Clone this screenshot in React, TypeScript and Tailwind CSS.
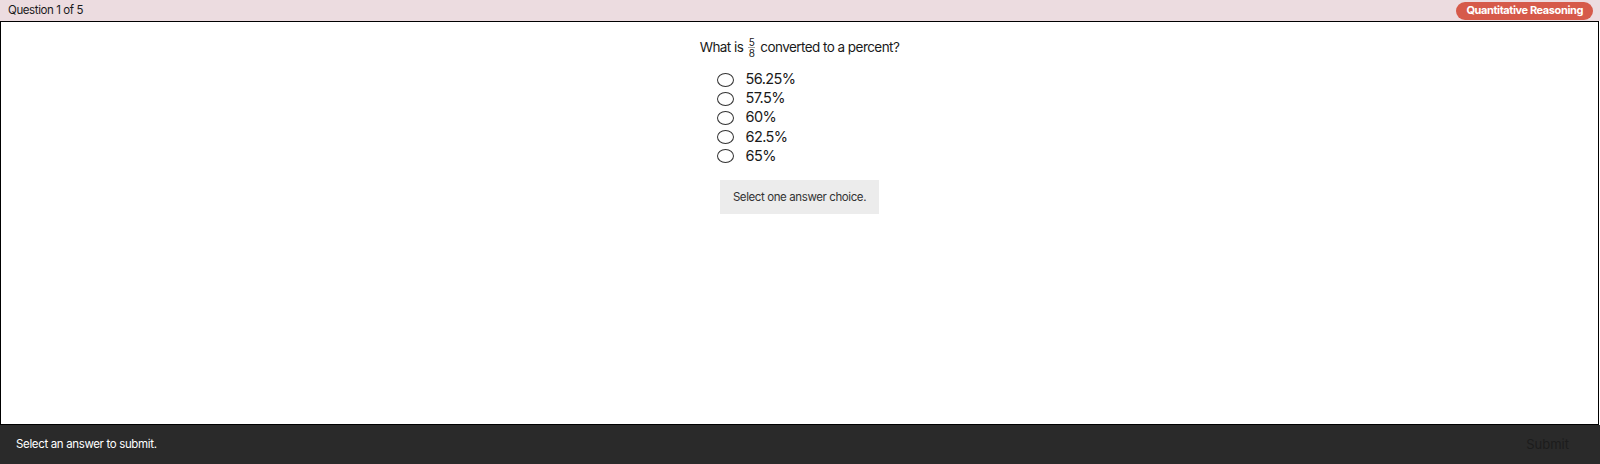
import { useState } from 'react';

const choices = ['56.25%', '57.5%', '60%', '62.5%', '65%'];

export default function App() {
  const [picked, setPicked] = useState<number | null>(null);

  return (
    <div className="h-[464px] w-[1600px] flex flex-col bg-white text-[#1a1a1a] font-['Inter','Liberation_Sans',sans-serif]">
      {/* header */}
      <div className="h-[21px] shrink-0 flex items-center justify-between bg-[#ecdce0] pl-[8px] pr-[7px]">
        <span className="text-[11.5px] tracking-[-0.4px] leading-none">Question 1 of 5</span>
        <span className="h-[18px] px-[10px] flex items-center rounded-full bg-[#d65a4a] text-white text-[11px] tracking-[-0.4px] font-bold leading-none">
          Quantitative Reasoning
        </span>
      </div>

      {/* question area */}
      <div className="flex-1 border border-black mr-[1px] flex flex-col items-center pt-[14px]">
        <div className="h-[22px] flex items-center gap-[5px] text-[13.5px] tracking-[-0.55px]">
          <span>What is</span>
          <span className="flex flex-col items-center text-[10px] leading-[10px] tracking-normal">
            <span>5</span>
            <span className="w-[7px] border-t border-[#1a1a1a]/40" />
            <span>8</span>
          </span>
          <span>converted to a percent?</span>
        </div>

        <div className="mt-[12px] ml-[-86px] flex flex-col">
          {choices.map((c, i) => (
            <label key={c} className="h-[19.1px] flex items-center gap-[11px] cursor-pointer" onClick={() => setPicked(i)}>
              <span className="w-[17px] h-[14px] rounded-[50%] border-[1.5px] border-[#333] flex items-center justify-center">
                {picked === i && <span className="w-[8px] h-[6px] rounded-[50%] bg-[#333]" />}
              </span>
              <span className="text-[14.5px] tracking-[-0.55px] leading-none">{c}</span>
            </label>
          ))}
        </div>

        <div className="mt-[15px] h-[34px] px-[13px] flex items-center justify-center whitespace-nowrap bg-[#ececec] text-[11.5px] tracking-[-0.4px] text-[#333]">
          Select one answer choice.
        </div>
      </div>

      {/* footer */}
      <div className="h-[39px] shrink-0 flex items-center justify-between bg-[#2a2a2a] pl-[16px] pr-[31px]">
        <span className="text-[11.5px] tracking-[-0.35px] text-white">{picked === null ? 'Select an answer to submit.' : 'Ready to submit.'}</span>
        <button className="text-[13px] text-[#1c1c1c]">Submit</button>
      </div>
    </div>
  );
}
